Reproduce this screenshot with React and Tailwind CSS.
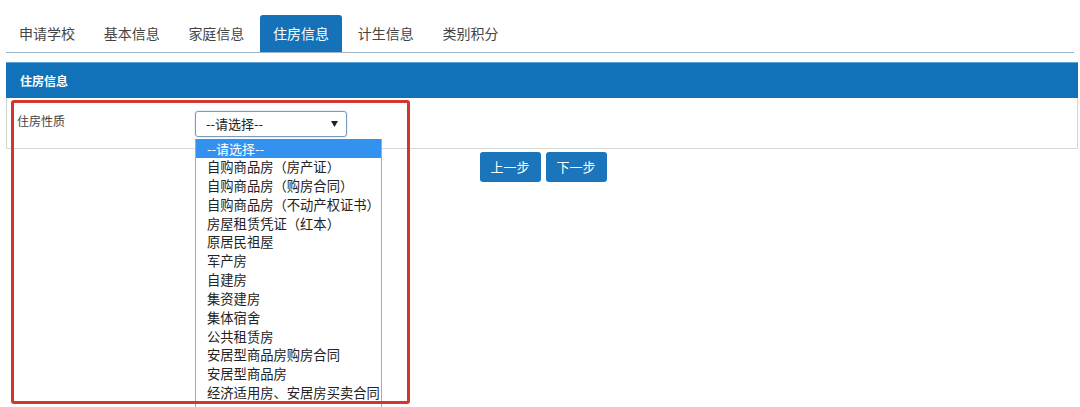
const tabs = ['申请学校', '基本信息', '家庭信息', '住房信息', '计生信息', '类别积分']

const options = [
  '自购商品房（房产证）',
  '自购商品房（购房合同）',
  '自购商品房（不动产权证书）',
  '房屋租赁凭证（红本）',
  '原居民祖屋',
  '军产房',
  '自建房',
  '集资建房',
  '集体宿舍',
  '公共租赁房',
  '安居型商品房购房合同',
  '安居型商品房',
  '经济适用房、安居房买卖合同',
]

export default function App() {
  return (
    <div
      className="relative w-[1080px] h-[407px] overflow-hidden bg-white text-[#333]"
      style={{ fontFamily: '"Noto Sans CJK SC", "Noto Sans", sans-serif' }}
    >
      <div className="px-[6px] pt-[15px]">
        {/* Tabs */}
        <div className="flex gap-[2.7px] border-b border-[#9fb4c7]">
          {tabs.map((t) => (
            <div
              key={t}
              className={
                t === '住房信息'
                  ? 'w-[82px] h-[37px] flex items-center justify-center text-[14px] text-white bg-[#1572b9] rounded-t-[3px]'
                  : 'w-[82px] h-[37px] flex items-center justify-center text-[14px] text-[#444]'
              }
            >
              {t}
            </div>
          ))}
        </div>

        {/* Panel */}
        <div className="mt-[9px] w-[1072px]">
          <div className="h-[36px] bg-[#1272b9] border-t border-[#5fa4d8] flex items-center pl-[14px]">
            <span className="text-[12px] font-bold text-white">住房信息</span>
          </div>
          <div className="h-[51px] flex border-l border-r border-b border-[#d6d6d6]">
            <div className="w-[188px] pl-[10px] pt-[14px] text-[12px] text-[#444]">住房性质</div>
            <div className="pt-[13px]">
              <div className="w-[152px] h-[26px] border border-[#7c9cbf] rounded-[3px] shadow-[0_0_2px_rgba(80,130,190,0.4)] flex items-center justify-between pl-[10px] pr-[8px] text-[13px] text-[#222]">
                <span>--请选择--</span>
                <svg width="7" height="6" viewBox="0 0 7 6">
                  <path d="M0 0 L7 0 L3.5 6 Z" fill="#222" />
                </svg>
              </div>
            </div>
          </div>
          <div className="flex justify-center gap-[5px] mt-[3px] pl-[2px]">
            <button className="w-[61px] h-[30px] rounded-[3px] bg-[#1a75bb] text-white text-[13px]">上一步</button>
            <button className="w-[61px] h-[30px] rounded-[3px] bg-[#1a75bb] text-white text-[13px]">下一步</button>
          </div>
        </div>
      </div>

      {/* Open dropdown list */}
      <div className="absolute left-[195px] top-[139px] w-[187px] h-[270px] bg-white border-l border-[#a8a8a8] border-r border-r-[#8db2d8]">
        <div className="h-[19px] bg-[#3392ef] text-white text-[13px] leading-[19px] pl-[11px]">--请选择--</div>
        {options.map((o) => (
          <div key={o} className="h-[18.85px] text-[13.3px] leading-[18.85px] pl-[11px] text-[#222] whitespace-nowrap">
            {o}
          </div>
        ))}
      </div>

      {/* Red annotation box */}
      <div className="absolute left-[11px] top-[100px] w-[399px] h-[304px] border-[3px] border-[#d3352f] rounded-[3px]" />
    </div>
  )
}
